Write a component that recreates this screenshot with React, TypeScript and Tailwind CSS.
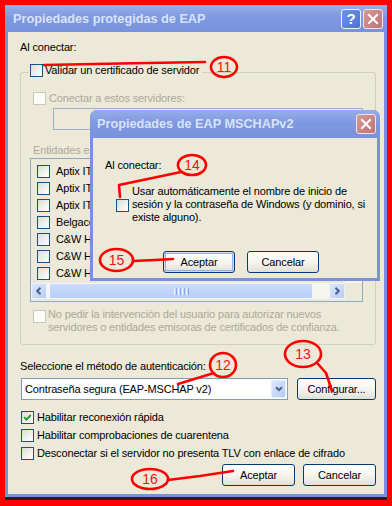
import clsx from 'clsx';
import React from 'react';

const Check = ({ checked = false, disabled = false }: { checked?: boolean; disabled?: boolean }) => (
    <span
        className={clsx(
            'flex size-[13px] shrink-0 items-center justify-center border',
            disabled ? 'border-[#CAC8BB] bg-[#FBFBF8]' : 'border-[#1C5180] bg-linear-to-br from-[#DCDCD7] to-white',
        )}
    >
        {checked && (
            <svg height="9" viewBox="0 0 9 9" width="9">
                <path d="M1.2 4.2 L3.5 6.6 L7.8 2" fill="none" stroke="#21A121" strokeWidth="1.9" />
            </svg>
        )}
    </span>
);

const XpButton = ({ children, className, isDefault }: { children: React.ReactNode; className?: string; isDefault?: boolean }) => (
    <button
        className={clsx(
            'flex h-[22px] shrink-0 items-center justify-center rounded-[3px] border border-[#003C74] bg-linear-to-b from-white via-[#F6F5F0] to-[#E2DFD4] text-[11px] leading-[13px] text-black',
            isDefault && 'shadow-[inset_0_0_0_1px_#CCDDFB,inset_0_0_0_2px_#8FB0EA]',
            className,
        )}
        type="button"
    >
        {children}
    </button>
);

const CloseButton = () => (
    <div className="flex size-[20px] items-center justify-center rounded-[3px] border border-[#F2E4E4] bg-linear-to-br from-[#D69A97] to-[#BC7573]">
        <svg height="12" viewBox="0 0 12 12" width="12">
            <path d="M2 2 L10 10 M10 2 L2 10" stroke="white" strokeLinecap="square" strokeWidth="2" />
        </svg>
    </div>
);

const TitleBar = ({ title, withHelp }: { title: string; withHelp?: boolean }) => (
    <div className="flex shrink-0 items-center bg-linear-to-b from-[#97ADE9] via-[#7D97E0] to-[#7892DE]">
        <span className="flex-1 whitespace-nowrap font-bold text-[12.7px] leading-[14px] tracking-normal text-[#D9E3F8]">{title}</span>
        <div className="flex gap-[2px]">
            {withHelp && (
                <div className="flex size-[20px] items-center justify-center rounded-[3px] border border-[#EEF2FC] bg-linear-to-br from-[#6E95EC] to-[#4A72D8] text-[15px] font-bold leading-none text-white">
                    ?
                </div>
            )}
            <CloseButton />
        </div>
    </div>
);

const ArrowButton = ({ dir }: { dir: 'left' | 'right' }) => (
    <div className="flex h-full w-[16px] shrink-0 items-center justify-center rounded-[2px] border border-[#EEF2FD] bg-linear-to-br from-[#DDE7FD] to-[#B8CCF9]">
        <svg height="8" viewBox="0 0 8 8" width="8">
            <path d={dir === 'left' ? 'M5.5 0.8 L2.2 4 L5.5 7.2' : 'M2.5 0.8 L5.8 4 L2.5 7.2'} fill="none" stroke="#4D6185" strokeWidth="2" />
        </svg>
    </div>
);

const certificates = ['Aptix IT', 'Aptix IT', 'Aptix IT', 'Belgacom', 'C&W HKT', 'C&W HKT', 'C&W HKT'];

export default function App() {
    return (
        <div className="relative h-[506px] w-[392px] overflow-hidden bg-[#FF0000] px-[5px] pt-[5px] font-['Liberation_Sans',Arial,sans-serif] text-[11px] leading-[13px] tracking-[-0.15px] text-black">
            <div className="flex h-[492px] flex-col">
                <div className="h-[27px] [&>div]:h-full [&>div]:pl-[8px] [&>div]:pr-[4px]">
                    <TitleBar title="Propiedades protegidas de EAP" withHelp />
                </div>
                <div className="flex flex-1 flex-col border-x-[3px] border-b-[3px] border-[#7891DD] bg-[#ECE9D8] pl-[12px] pr-[8px] pt-[9px]">
                    <div className="h-[13px]">Al conectar:</div>

                    <div className="mt-[18px] flex flex-col rounded-[3px] border border-[#D0D0BF] pb-[10px]">
                        <div className="-mt-[9px] ml-[8px] flex w-fit items-center gap-[2px] bg-[#ECE9D8] pl-[1px] pr-[3px]">
                            <Check />
                            <span>Validar un certificado de servidor</span>
                        </div>

                        <div className="ml-[12px] mt-[15px] flex h-[13px] items-center gap-[3px] text-[#ACA899]">
                            <Check disabled />
                            <span>Conectar a estos servidores:</span>
                        </div>
                        <div className="ml-[32px] mr-[12px] mt-[3px] h-[22px] border border-[#9DB1CB]" />

                        <div className="ml-[12px] mt-[14px] h-[13px] whitespace-nowrap text-[#ACA899]">Entidades e</div>
                        <div className="ml-[9px] mr-[12px] mt-[1px] flex h-[144px] flex-col border border-[#8FA8C8]">
                            <div className="flex flex-1 overflow-hidden">
                                <div className="flex flex-1 flex-col pl-[6px] pt-[4px]">
                                    {certificates.map((name, i) => (
                                        <div className="flex h-[17px] items-center gap-[6px] whitespace-nowrap" key={i}>
                                            <Check />
                                            <span>{name}</span>
                                        </div>
                                    ))}
                                </div>
                                <div className="w-[17px] bg-[#F5F4EE]" />
                            </div>
                            <div className="mb-[2px] flex h-[16px]">
                                <div className="flex flex-1 bg-[#F6F5F0]">
                                    <ArrowButton dir="left" />
                                    <div className="ml-[2px] flex w-[264px] items-center justify-center rounded-[2px] border border-[#F0F4FE] bg-linear-to-b from-[#CCDBFD] to-[#B8CEFB]">
                                        <div className="flex gap-[1px]">
                                            <span className="h-[7px] w-[1px] bg-[#EEF3FF]" />
                                            <span className="h-[7px] w-[1px] bg-[#8CA8E8]" />
                                            <span className="h-[7px] w-[1px] bg-[#EEF3FF]" />
                                            <span className="h-[7px] w-[1px] bg-[#8CA8E8]" />
                                            <span className="h-[7px] w-[1px] bg-[#EEF3FF]" />
                                            <span className="h-[7px] w-[1px] bg-[#8CA8E8]" />
                                            <span className="h-[7px] w-[1px] bg-[#EEF3FF]" />
                                            <span className="h-[7px] w-[1px] bg-[#8CA8E8]" />
                                        </div>
                                    </div>
                                    <div className="flex-1" />
                                    <ArrowButton dir="right" />
                                </div>
                                <div className="w-[17px]" />
                            </div>
                        </div>

                        <div className="ml-[12px] mt-[6px] flex gap-[2px] text-[#ACA899]">
                            <div className="mt-[2px]">
                                <Check disabled />
                            </div>
                            <span>
                                No pedir la intervención del usuario para autorizar nuevos
                                <br />
                                servidores o entidades emisoras de certificados de confianza.
                            </span>
                        </div>
                    </div>

                    <div className="mt-[15px] h-[13px]">Seleccione el método de autenticación:</div>
                    <div className="ml-[1px] mt-[5px] flex h-[22px] gap-[9px]">
                        <div className="flex w-[267px] items-center border border-[#7F9DB9] bg-white pl-[3px]">
                            <span className="flex-1 whitespace-nowrap">Contraseña segura (EAP-MSCHAP v2)</span>
                            <div className="my-[1px] mr-[1px] flex h-[18px] w-[15px] items-center justify-center rounded-[2px] border border-[#E6EDFD] bg-linear-to-br from-[#DDE7FD] to-[#B6CAF7]">
                                <svg height="6" viewBox="0 0 8 6" width="8">
                                    <path d="M1 1.2 L4 4.2 L7 1.2" fill="none" stroke="#4D6185" strokeWidth="2" />
                                </svg>
                            </div>
                        </div>
                        <XpButton className="w-[79px]">Configurar...</XpButton>
                    </div>

                    <div className="ml-[1px] mt-[8px] flex flex-col">
                        <div className="flex h-[18px] items-center gap-[3px]">
                            <Check checked />
                            <span>Habilitar reconexión rápida</span>
                        </div>
                        <div className="flex h-[18px] items-center gap-[3px]">
                            <Check />
                            <span>Habilitar comprobaciones de cuarentena</span>
                        </div>
                        <div className="flex h-[18px] items-center gap-[3px] whitespace-nowrap">
                            <Check />
                            <span>Desconectar si el servidor no presenta TLV con enlace de cifrado</span>
                        </div>
                    </div>

                    <div className="mt-[2px] flex justify-end gap-[8px]">
                        <XpButton className="w-[73px]">Aceptar</XpButton>
                        <XpButton className="w-[73px]">Cancelar</XpButton>
                    </div>
                </div>
            </div>
            <div className="h-[3px] bg-[#2B201E]" />

            {/* diálogo MSCHAPv2 encima */}
            <div className="absolute left-[90px] top-[110px] flex h-[171px] w-[290px] flex-col overflow-hidden rounded-t-[7px] bg-[#7A8FDD]">
                <div className="h-[28px] [&>div]:h-full [&>div]:pl-[7px] [&>div]:pr-[4px]">
                    <TitleBar title="Propiedades de EAP MSCHAPv2" />
                </div>
                <div className="mx-[3px] mb-[3px] flex flex-1 flex-col bg-[#ECE9D8] pl-[12px] pt-[21px]">
                    <div className="h-[13px]">Al conectar:</div>
                    <div className="mt-[13px] flex items-start gap-[3px]">
                        <div className="ml-[11px] mt-[14px]">
                            <Check />
                        </div>
                        <span className="whitespace-nowrap">
                            Usar automáticamente el nombre de inicio de
                            <br />
                            sesión y la contraseña de Windows (y dominio, si
                            <br />
                            existe alguno).
                        </span>
                    </div>
                    <div className="ml-[58px] mt-[27px] flex gap-[12px]">
                        <XpButton className="w-[72px]" isDefault>
                            Aceptar
                        </XpButton>
                        <XpButton className="w-[72px]">Cancelar</XpButton>
                    </div>
                </div>
            </div>

            {/* anotaciones */}
            <svg className="pointer-events-none absolute left-0 top-0" height="506" viewBox="0 0 392 506" width="392">
                <g fill="none" stroke="#FF0000" strokeLinecap="round" strokeLinejoin="round" strokeWidth="2.6">
                    <path d="M44 65 L120 63.5 L205 62" />
                    <ellipse cx="224" cy="67" rx="13" ry="10" />
                    <ellipse cx="192" cy="165" rx="14" ry="10" />
                    <path d="M181 172 L119 185 L120 197" />
                    <ellipse cx="116.5" cy="260" rx="16.5" ry="11" />
                    <path d="M133 261 L155 260 L173 259" />
                    <ellipse cx="223" cy="365" rx="13" ry="12" />
                    <path d="M178 384 L214 373" />
                    <ellipse cx="303" cy="354" rx="18" ry="13" />
                    <path d="M318 364 L326 373 L332 391" />
                    <ellipse cx="150" cy="479" rx="18" ry="10" />
                    <path d="M168 480 L200 476 L233 471" />
                </g>
                <g fill="#F01414" fontFamily="Liberation Sans, Arial, sans-serif" fontSize="14" letterSpacing="0" textAnchor="middle">
                    <text x="224" y="72">11</text>
                    <text x="192" y="170">14</text>
                    <text x="116.5" y="265">15</text>
                    <text x="223" y="370">12</text>
                    <text x="303" y="359">13</text>
                    <text x="150" y="484">16</text>
                </g>
            </svg>
        </div>
    );
}
